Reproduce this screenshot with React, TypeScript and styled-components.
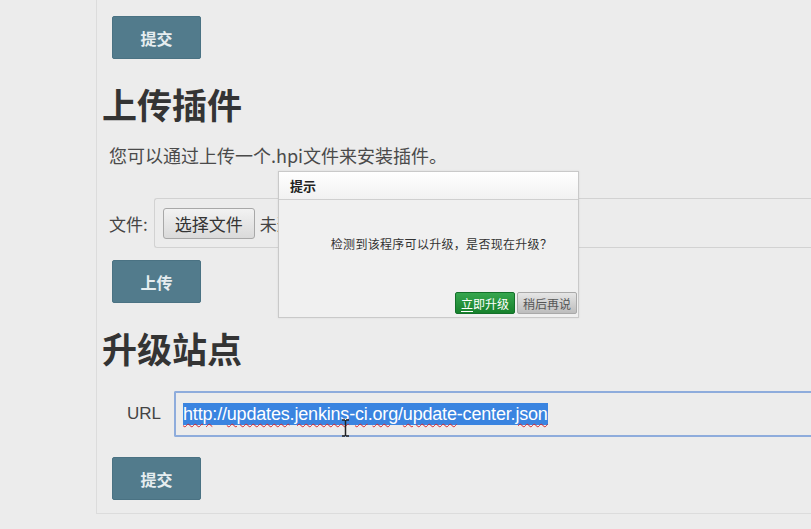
import React from "react";
import styled, { createGlobalStyle } from "styled-components";

const Global = createGlobalStyle`
  html, body { margin: 0; padding: 0; background: #ececec; }
  body { font-family: "Liberation Sans", "Noto Sans CJK SC", sans-serif; color: #333; overflow: hidden; }
`;

const Page = styled.div`
  display: flex;
  width: 811px;
  height: 529px;
  position: relative;
  overflow: hidden;
`;

const Gutter = styled.div`
  width: 96px;
  flex: none;
`;

const Panel = styled.div`
  flex: 1;
  height: 514px;
  border-left: 1px solid #dcdcdc;
  border-bottom: 1px solid #dcdcdc;
  display: flex;
  flex-direction: column;
  padding-top: 16px;
  box-sizing: border-box;
  position: relative;
`;

const Button = styled.button<{ $top?: number }>`
  width: 89px;
  height: 43px;
  margin-left: 15px;
  margin-top: ${(p) => p.$top ?? 0}px;
  background: #527b8c;
  border: 1px solid #4a7283;
  border-radius: 2px;
  color: #e6edf0;
  font-family: "Noto Sans CJK SC", sans-serif;
  font-weight: 700;
  font-size: 16px;
  padding: 0;
  flex: none;
`;

const Heading = styled.h2<{ $top: number }>`
  margin: ${(p) => p.$top}px 0 0 5px;
  font-family: "Noto Sans CJK SC", sans-serif;
  font-weight: 700;
  font-size: 35px;
  line-height: 42px;
  color: #343434;
`;

const Para = styled.p`
  margin: 18px 0 0 12px;
  font-family: "Noto Sans CJK SC", sans-serif;
  font-size: 18px;
  line-height: 24px;
  color: #4a4a4a;
`;

const FileRow = styled.div`
  display: flex;
  align-items: center;
  margin: 31px 0 0 12px;
  height: 50px;
`;

const Label = styled.span`
  font-family: "Noto Sans CJK SC", "Liberation Sans", sans-serif;
  font-size: 17px;
  color: #444;
  flex: none;
`;

const FileBox = styled.div`
  flex: 1;
  height: 50px;
  margin-left: 6px;
  margin-right: -4px;
  border: 1px solid #d2d2d2;
  border-right: none;
  border-radius: 3px 0 0 3px;
  box-sizing: border-box;
  display: flex;
  align-items: center;
  padding-left: 8px;
  gap: 5px;
`;

const ChooseBtn = styled.span`
  display: inline-flex;
  align-items: center;
  justify-content: center;
  width: 92px;
  height: 31px;
  box-sizing: border-box;
  border: 1px solid #a8a8a8;
  border-radius: 3px;
  background: linear-gradient(#f2f2f2, #dadada);
  font-family: "Noto Sans CJK SC", sans-serif;
  font-size: 17px;
  color: #333;
`;

const NoFile = styled.span`
  font-family: "Noto Sans CJK SC", sans-serif;
  font-size: 17px;
  color: #444;
`;

const UrlRow = styled.div`
  display: flex;
  align-items: center;
  margin: 22px 0 0 0;
  height: 46px;
`;

const UrlLabel = styled.span`
  font-family: "Liberation Sans", sans-serif;
  font-size: 17px;
  color: #444;
  width: 64px;
  text-align: right;
  flex: none;
`;

const UrlField = styled.div`
  flex: 1;
  margin-left: 13px;
  margin-right: -4px;
  height: 46px;
  box-sizing: border-box;
  border: 2px solid #8eacdc;
  border-right: none;
  border-radius: 2px 0 0 2px;
  display: flex;
  align-items: center;
  padding-left: 7px;
  position: relative;
`;

const Selected = styled.span`
  background: #3a84e0;
  color: #fff;
  font-family: "Liberation Sans", sans-serif;
  font-size: 18px;
  line-height: 22px;
  white-space: nowrap;
  letter-spacing: -0.18px;
`;

const Typo = styled.span`
  text-decoration: underline wavy #d8262c;
  text-decoration-thickness: 1px;
  text-underline-offset: 3px;
`;

const Caret = styled.svg`
  position: absolute;
  left: 165px;
  top: 26px;
`;

const Dialog = styled.div`
  position: absolute;
  left: 278px;
  top: 171px;
  width: 301px;
  height: 147px;
  box-sizing: border-box;
  border: 1px solid #c9c9c9;
  background: #f0f0f0;
  display: flex;
  flex-direction: column;
  box-shadow: 0 0 2px rgba(0, 0, 0, 0.08);
`;

const DialogHead = styled.div`
  height: 28px;
  flex: none;
  box-sizing: border-box;
  border-bottom: 1px solid #cfcfcf;
  background: linear-gradient(#ffffff, #f1f1f1);
  display: flex;
  align-items: center;
  padding-left: 11px;
  font-family: "Noto Sans CJK SC", sans-serif;
  font-weight: 700;
  font-size: 13px;
  color: #222;
`;

const DialogBody = styled.div`
  flex: 1;
  display: flex;
  flex-direction: column;
`;

const Message = styled.div`
  text-align: center;
  margin-top: 36px;
  padding-left: 26px;
  font-family: "Noto Sans CJK SC", sans-serif;
  font-size: 12px;
  line-height: 16px;
  letter-spacing: 0.3px;
  color: #333;
`;

const Actions = styled.div`
  margin-top: auto;
  display: flex;
  justify-content: flex-end;
  gap: 2px;
  padding: 0 1px 3px 0;
`;

const DlgBtn = styled.span<{ $primary?: boolean }>`
  width: 60px;
  height: 22px;
  box-sizing: border-box;
  display: inline-flex;
  align-items: center;
  justify-content: center;
  border-radius: 2px;
  font-family: "Noto Sans CJK SC", sans-serif;
  font-size: 12px;
  border: 1px solid ${(p) => (p.$primary ? "#14702a" : "#a9a9a9")};
  background: ${(p) =>
    p.$primary ? "linear-gradient(#36a64e, #17812c)" : "linear-gradient(#e6e6e6, #bdbdbd)"};
  color: ${(p) => (p.$primary ? "#fff" : "#555")};
`;

const Accel = styled.span`
  text-decoration: underline;
  text-underline-offset: 2px;
`;

export default function App() {
  return (
    <Page>
      <Global />
      <Gutter />
      <Panel>
        <Button>提交</Button>
        <Heading $top={24}>上传插件</Heading>
        <Para>您可以通过上传一个.hpi文件来安装插件。</Para>
        <FileRow>
          <Label>文件:</Label>
          <FileBox>
            <ChooseBtn>选择文件</ChooseBtn>
            <NoFile>未选择任何文件</NoFile>
          </FileBox>
        </FileRow>
        <Button $top={12}>上传</Button>
        <Heading $top={24}>升级站点</Heading>
        <UrlRow>
          <UrlLabel>URL</UrlLabel>
          <UrlField>
            <Selected>
              <Typo>http</Typo>://<Typo>updates</Typo>.<Typo>jenkins</Typo>-<Typo>ci</Typo>.<Typo>org</Typo>/
              <Typo>update</Typo>-center.<Typo>json</Typo>
            </Selected>
            <Caret width="9" height="18" viewBox="0 0 9 18">
              <path d="M1 1h3M5 1h3M4.5 1v16M1 17h3M5 17h3" stroke="#222" strokeWidth="1.5" fill="none" />
            </Caret>
          </UrlField>
        </UrlRow>
        <Button $top={20}>提交</Button>
      </Panel>
      <Dialog>
        <DialogHead>提示</DialogHead>
        <DialogBody>
          <Message>检测到该程序可以升级，是否现在升级？</Message>
          <Actions>
            <DlgBtn $primary>
              <Accel>立</Accel>即升级
            </DlgBtn>
            <DlgBtn>稍后再说</DlgBtn>
          </Actions>
        </DialogBody>
      </Dialog>
    </Page>
  );
}
